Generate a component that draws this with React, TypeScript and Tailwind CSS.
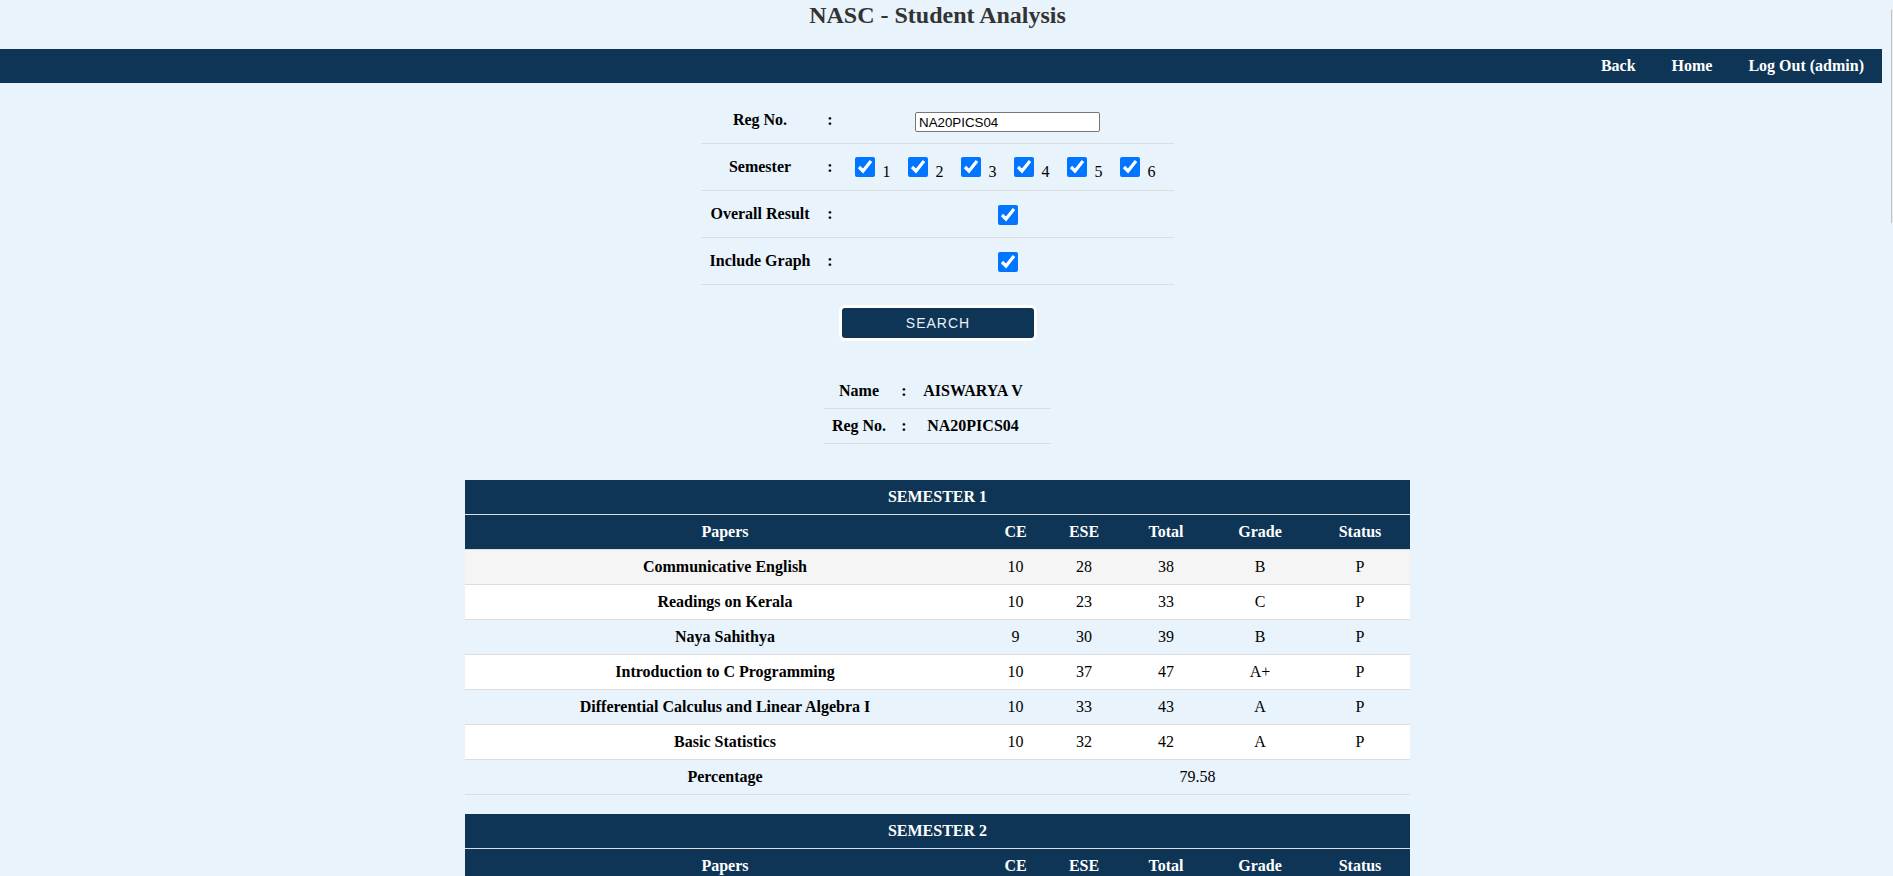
import React from 'react';

type Paper = {
  paper: string;
  ce: number;
  ese: number;
  total: number;
  grade: string;
  status: string;
};

const semesters: { title: string; papers: Paper[]; percentage?: string }[] = [
  {
    title: 'SEMESTER 1',
    papers: [
      { paper: 'Communicative English', ce: 10, ese: 28, total: 38, grade: 'B', status: 'P' },
      { paper: 'Readings on Kerala', ce: 10, ese: 23, total: 33, grade: 'C', status: 'P' },
      { paper: 'Naya Sahithya', ce: 9, ese: 30, total: 39, grade: 'B', status: 'P' },
      { paper: 'Introduction to C Programming', ce: 10, ese: 37, total: 47, grade: 'A+', status: 'P' },
      { paper: 'Differential Calculus and Linear Algebra I', ce: 10, ese: 33, total: 43, grade: 'A', status: 'P' },
      { paper: 'Basic Statistics', ce: 10, ese: 32, total: 42, grade: 'A', status: 'P' },
    ],
    percentage: '79.58',
  },
  { title: 'SEMESTER 2', papers: [] },
];

const cols = 'grid grid-cols-[520px_61px_76px_88px_100px_100px]';

function FormRow({ label, children }: { label: string; children: React.ReactNode }) {
  return (
    <div className="grid grid-cols-[118px_22px_333px] h-[47px] border-b border-[#dddddd] items-center">
      <div className="text-center font-bold">{label}</div>
      <div className="text-center font-bold">:</div>
      <div className="flex justify-center items-center">{children}</div>
    </div>
  );
}

function SemesterTable({ title, papers, percentage }: { title: string; papers: Paper[]; percentage?: string }) {
  return (
    <div className="w-[945px] mb-[19px]">
      <div className="h-[35px] bg-[#0f3556] border-b border-[#dddddd] flex items-center justify-center text-white font-bold">
        {title}
      </div>
      <div className={`${cols} h-[35px] bg-[#0f3556] border-b border-[#dddddd] items-center text-center text-white font-bold`}>
        <div>Papers</div>
        <div>CE</div>
        <div>ESE</div>
        <div>Total</div>
        <div>Grade</div>
        <div>Status</div>
      </div>
      {papers.map((p, i) => (
        <div
          key={p.paper}
          className={`${cols} h-[35px] border-b border-[#dddddd] items-center text-center text-black ${
            i === 0 ? 'bg-[#f5f5f5]' : i % 2 === 1 ? 'bg-white' : ''
          }`}
        >
          <div className="font-bold">{p.paper}</div>
          <div>{p.ce}</div>
          <div>{p.ese}</div>
          <div>{p.total}</div>
          <div>{p.grade}</div>
          <div>{p.status}</div>
        </div>
      ))}
      {percentage && (
        <div className="grid grid-cols-[520px_425px] h-[35px] border-b border-[#dddddd] items-center text-center text-black">
          <div className="font-bold">Percentage</div>
          <div>{percentage}</div>
        </div>
      )}
    </div>
  );
}

export default function App() {
  return (
    <div className="flex h-[876px] overflow-hidden bg-[#e8f3fc] font-['Liberation_Serif',serif] text-[16px] text-black">
      <div className="w-[1882px] shrink-0">
        <h1 className="pt-[1px] text-center text-[24px] leading-[28px] font-bold text-[#333333] w-[1875px]">
          NASC - Student Analysis
        </h1>

        <nav className="mt-[20px] h-[34px] bg-[#0f3556] flex justify-end items-center">
          {['Back', 'Home', 'Log Out (admin)'].map((l) => (
            <a key={l} href="#" className="px-[18px] text-white font-bold">
              {l}
            </a>
          ))}
        </nav>

        <div className="w-[1875px] flex flex-col items-center">
          {/* search form */}
          <div className="mt-[14px] w-[473px]">
            <FormRow label="Reg No.">
              <input
                type="text"
                defaultValue="NA20PICS04"
                className="mt-[4px] w-[185px] h-[20px] px-[3px] bg-white border border-[#767676] rounded-[2px] text-[13.33px] font-['Liberation_Sans',Arial,sans-serif] text-black"
              />
            </FormRow>
            <FormRow label="Semester">
              <div className="pt-[4px] pl-[1px] pr-[6px] leading-[18px]">
                {[1, 2, 3, 4, 5, 6].map((n) => (
                  <span key={n} className={n < 6 ? 'mr-[17px]' : ''}>
                    <input type="checkbox" defaultChecked className="w-5 h-5 align-baseline accent-[#0075ff]" />
                    <span className="ml-[8px]">{n}</span>
                  </span>
                ))}
              </div>
            </FormRow>
            <FormRow label="Overall Result">
              <input type="checkbox" defaultChecked className="w-5 h-5 mt-[2px] accent-[#0075ff]" />
            </FormRow>
            <FormRow label="Include Graph">
              <input type="checkbox" defaultChecked className="w-5 h-5 mt-[2px] accent-[#0075ff]" />
            </FormRow>
          </div>

          <button className="mt-[20px] ml-[1px] w-[198px] h-[36px] rounded-[6px] border-[3px] border-white bg-[#0f3556] text-[#e8f0f8] text-[14px] tracking-[1px] font-['Liberation_Sans',Arial,sans-serif]">
            SEARCH
          </button>

          {/* student info */}
          <div className="mt-[33px] w-[227px] font-bold">
            <div className="grid grid-cols-[70px_20px_118px_19px] h-[35px] border-b border-[#dddddd] items-center text-center">
              <div>Name</div>
              <div>:</div>
              <div>AISWARYA V</div>
              <div />
            </div>
            <div className="grid grid-cols-[70px_20px_118px_19px] h-[35px] border-b border-[#dddddd] items-center text-center">
              <div>Reg No.</div>
              <div>:</div>
              <div>NA20PICS04</div>
              <div />
            </div>
          </div>

          <div className="mt-[36px] flex flex-col items-center">
            {semesters.map((s) => (
              <SemesterTable key={s.title} {...s} />
            ))}
          </div>
        </div>
      </div>

      {/* scrollbar */}
      <div className="flex-1">
        <div className="ml-[9px] mt-[10px] h-[213px] border-l border-[#c1c1c1] bg-[#ececec]" />
      </div>
    </div>
  );
}
